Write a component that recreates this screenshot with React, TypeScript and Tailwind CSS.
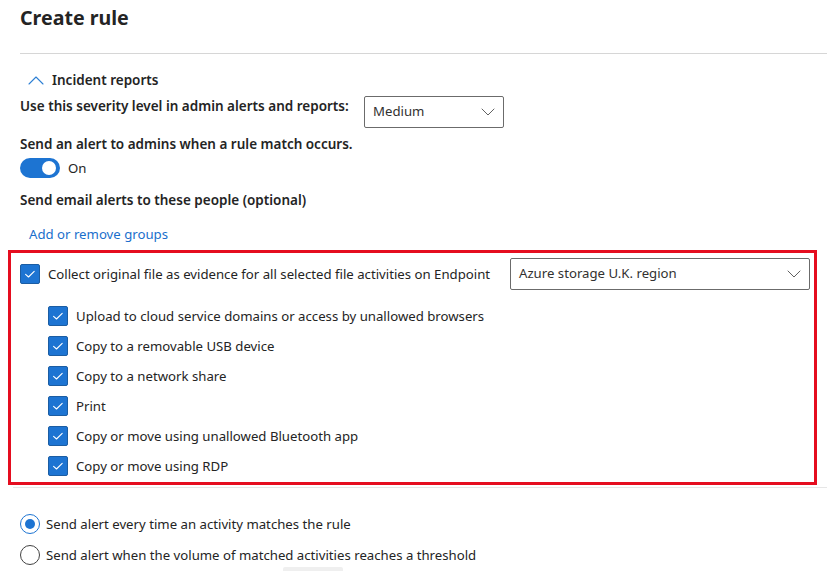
import React from "react";

const font = { fontFamily: '"Segoe UI", "Noto Sans", "Open Sans", sans-serif' };

function Check() {
  return (
    <span className="flex h-[20px] w-[20px] shrink-0 items-center justify-center rounded-[2px] border border-[#1b5da3] bg-[#1d74d2]">
      <svg width="18" height="18" viewBox="0 0 18 18" fill="none">
        <path d="M4.6 9.4 L7.5 12 L13.2 6.3" stroke="white" strokeWidth="1.1" strokeLinecap="round" strokeLinejoin="round" />
      </svg>
    </span>
  );
}

function Chevron() {
  return (
    <svg width="14" height="8" viewBox="0 0 14 8" fill="none">
      <path d="M1 1 L7 7 L13 1" stroke="#616161" strokeWidth="1" strokeLinecap="round" strokeLinejoin="round" />
    </svg>
  );
}

const subs = [
  "Upload to cloud service domains or access by unallowed browsers",
  "Copy to a removable USB device",
  "Copy to a network share",
  "Print",
  "Copy or move using unallowed Bluetooth app",
  "Copy or move using RDP",
];

export default function App() {
  return (
    <div className="h-[571px] w-[827px] overflow-hidden bg-white text-[13.2px] text-[#242424]" style={font}>
      <div className="pl-[20px] pt-[4px]">
        <h1 className="text-[19.6px] font-bold leading-[28px] text-[#242424]">Create rule</h1>
        <div className="mt-[21px] h-px bg-[#d6d6d6]" />
      </div>
      <div className="mt-[16px] flex items-center gap-[8px] pl-[28px]">
        <svg width="16" height="10" viewBox="0 0 16 10" fill="none">
          <path d="M1 9 L8 2 L15 9" stroke="#2d7fd4" strokeWidth="1.1" strokeLinecap="round" strokeLinejoin="round" />
        </svg>
        <span className="text-[13.5px] font-semibold leading-[20px]">Incident reports</span>
      </div>
      <div className="mt-[6px] flex items-start pl-[20px]">
        <span className="w-[344px] shrink-0 text-[13.5px] font-semibold leading-[20px]">Use this severity level in admin alerts and reports:</span>
        <div className="flex h-[32px] w-[140px] items-center justify-between rounded-[2px] border border-[#6b6b6b] pl-[8px] pr-[8px]">
          <span className="text-[#323130]">Medium</span>
          <Chevron />
        </div>
      </div>
      <div className="mt-[6px] pl-[20px] text-[13.5px] font-semibold leading-[20px]">Send an alert to admins when a rule match occurs.</div>
      <div className="mt-[4px] flex items-center gap-[8px] pl-[20px]">
        <span className="relative flex h-[20px] w-[40px] items-center rounded-full bg-[#1d74d2]">
          <span className="absolute right-[4px] h-[14px] w-[14px] rounded-full bg-white" />
        </span>
        <span className="leading-[20px]">On</span>
      </div>
      <div className="mt-[12px] pl-[20px] text-[13.5px] font-semibold leading-[20px]">Send email alerts to these people (optional)</div>
      <div className="mt-[14px] pl-[29px] leading-[20px] text-[#1a6fcc]">Add or remove groups</div>

      <div className="mt-[6px]">
        <div className="ml-[8px] mr-[10px] border-[3px] border-[#e50d1f] pb-[6px] pl-[9px] pr-[4px] pt-[5px]">
          <div className="flex items-center justify-between">
            <div className="flex items-center gap-[8px]">
              <Check />
              <span className="leading-[20px]">Collect original file as evidence for all selected file activities on Endpoint</span>
            </div>
            <div className="flex h-[32px] w-[300px] items-center justify-between rounded-[2px] border border-[#6b6b6b] pl-[8px] pr-[8px]">
              <span className="text-[#323130]">Azure storage U.K. region</span>
              <Chevron />
            </div>
          </div>
          <div className="mt-[16px] flex flex-col gap-[10px] pl-[28px]">
            {subs.map((s) => (
              <div key={s} className="flex items-center gap-[8px]">
                <Check />
                <span className="leading-[20px]">{s}</span>
              </div>
            ))}
          </div>
        </div>
        <div className="ml-[13px] mt-[2px] h-px bg-[#e6e6e6]" />
      </div>

      <div className="mt-[26px] flex flex-col gap-[11px] pl-[20px]">
        <div className="flex items-center gap-[6px]">
          <span className="flex h-[20px] w-[20px] items-center justify-center rounded-full border border-[#1d74d2]">
            <span className="h-[10px] w-[10px] rounded-full bg-[#1d74d2]" />
          </span>
          <span className="leading-[20px]">Send alert every time an activity matches the rule</span>
        </div>
        <div className="flex items-center gap-[6px]">
          <span className="h-[20px] w-[20px] rounded-full border border-[#424242]" />
          <span className="leading-[20px]">Send alert when the volume of matched activities reaches a threshold</span>
        </div>
      </div>
      <div className="ml-[283px] mt-[2px] h-[6px] w-[60px] rounded-t-[2px] bg-[#efefef]" />
    </div>
  );
}
